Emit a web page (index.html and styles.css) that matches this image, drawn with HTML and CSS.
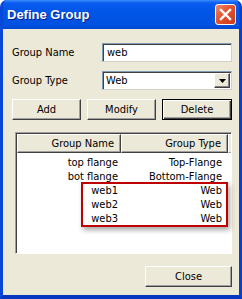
FILE: index.html
```html
<!DOCTYPE html>
<html lang="en">
<head>
    <meta charset="UTF-8">
    <title>Define Group</title>
    <link rel="stylesheet" href="styles.css">
</head>
<body>
    <div class="window">
        <div class="title-bar">
            <span class="title-text">Define Group</span>
            <div class="close-x">
                <svg width="13" height="13" viewBox="0 0 13 13">
                    <path d="M2 2 L11 11 M11 2 L2 11" stroke="#fff" stroke-width="2.4" stroke-linecap="square"/>
                </svg>
            </div>
        </div>

        <div class="content">
            <div class="field-row">
                <span class="label">Group Name</span>
                <div class="text-box">web</div>
            </div>
            <div class="field-row">
                <span class="label">Group Type</span>
                <div class="combo">
                    <span class="combo-value">Web</span>
                    <span class="combo-arrow">
                        <svg width="7" height="4" viewBox="0 0 7 4"><path d="M0 0 H7 L3.5 4 Z" fill="#000"/></svg>
                    </span>
                </div>
            </div>

            <div class="button-row">
                <div class="btn">Add</div>
                <div class="btn">Modify</div>
                <div class="btn btn-default"><span>Delete</span></div>
            </div>

            <div class="list">
                <div class="list-head">
                    <div class="head-cell col-name">Group Name</div>
                    <div class="head-cell col-type">Group Type</div>
                    <div class="head-fill"></div>
                </div>
                <div class="list-body">
                    <div class="list-row"><span class="col-name">top flange</span><span class="col-type">Top-Flange</span></div>
                    <div class="list-row"><span class="col-name">bot flange</span><span class="col-type">Bottom-Flange</span></div>
                    <div class="list-row"><span class="col-name">web1</span><span class="col-type">Web</span></div>
                    <div class="list-row"><span class="col-name">web2</span><span class="col-type">Web</span></div>
                    <div class="list-row"><span class="col-name">web3</span><span class="col-type">Web</span></div>
                </div>
                <div class="highlight"></div>
            </div>

            <div class="footer">
                <div class="btn btn-close">Close</div>
            </div>
        </div>
    </div>
</body>
</html>
```

FILE: styles.css
```css
* {
    box-sizing: border-box;
}

body {
    margin: 0;
    font-family: 'DejaVu Sans Condensed', 'DejaVu Sans', sans-serif;
    font-size: 11px;
    color: #000;
}

.window {
    width: 242px;
    height: 299px;
    display: flex;
    flex-direction: column;
    background: #0055e5;
    border-left: 3px solid #0848d8;
    border-right: 3px solid #0a3fc8;
    border-bottom: 4px solid #0838c0;
    border-radius: 7px 7px 0 0;
    overflow: hidden;
}

.title-bar {
    height: 29px;
    margin: 0 -3px;
    padding: 0 6px 0 7px;
    display: flex;
    justify-content: space-between;
    align-items: center;
    background: linear-gradient(#3c8cfb 0, #0a5cf0 3px, #0358ea 8px, #0055e5 50%, #0052e0 85%, #0046d0 100%);
}

.title-text {
    color: #fff;
    font-family: 'Liberation Sans', Arial, sans-serif;
    font-weight: bold;
    font-size: 13px;
    text-shadow: 1px 1px 0 #0a1f8a;
    padding-bottom: 1px;
}

.close-x {
    width: 21px;
    height: 21px;
    border: 1px solid #fff;
    border-radius: 3px;
    background: linear-gradient(135deg, #f0876a, #e2532d 45%, #c83a1c);
    display: flex;
    align-items: center;
    justify-content: center;
    margin-top: -1px;
}

.content {
    flex: 1;
    background: #ece9d8;
    padding: 14px 7px 0 9px;
    display: flex;
    flex-direction: column;
}

.field-row {
    display: flex;
    align-items: center;
    justify-content: space-between;
    height: 19px;
    margin-bottom: 9px;
}

.text-box,
.combo {
    width: 130px;
    height: 19px;
    background: #fff;
    border-top: 1px solid #7f9db9;
    border-left: 1px solid #7f9db9;
    border-right: 1px solid #d4d0c8;
    border-bottom: 1px solid #d4d0c8;
    box-shadow: inset 1px 1px 0 #404040;
    padding: 2px 4px;
}

.combo {
    display: flex;
    justify-content: space-between;
    align-items: center;
    padding: 0 1px 0 3px;
}

.combo-arrow {
    width: 16px;
    height: 15px;
    background: #ece9d8;
    border-top: 1px solid #fff;
    border-left: 1px solid #fff;
    border-right: 1px solid #404040;
    border-bottom: 1px solid #404040;
    box-shadow: inset -1px -1px 0 #808080;
    display: flex;
    align-items: center;
    justify-content: center;
}

.button-row {
    display: flex;
    gap: 6px;
}

.btn {
    width: 69px;
    height: 21px;
    background: #ece9d8;
    border-top: 1px solid #fff;
    border-left: 1px solid #fff;
    border-right: 1px solid #404040;
    border-bottom: 1px solid #404040;
    box-shadow: inset -1px -1px 0 #a0a0a0;
    display: flex;
    align-items: center;
    justify-content: center;
}

.btn-default {
    width: 70px;
    border: 1px solid #000;
    box-shadow: inset 1px 1px 0 #fff, inset -1px -1px 0 #404040, inset -2px -2px 0 #a0a0a0;
}

.list {
    position: relative;
    margin: 12px 0 0 3px;
    height: 122px;
    background: #fff;
    border-top: 1px solid #a0a0a0;
    border-left: 1px solid #a0a0a0;
    border-right: 1px solid #fff;
    border-bottom: 1px solid #fff;
    box-shadow: inset 1px 1px 0 #404040;
    padding: 1px 0 0 1px;
}

.list-head {
    display: flex;
    height: 19px;
}

.head-cell {
    background: #ece9d8;
    border-top: 1px solid #fff;
    border-left: 1px solid #fff;
    border-right: 1px solid #404040;
    border-bottom: 1px solid #404040;
    box-shadow: inset -1px -1px 0 #a0a0a0;
    display: flex;
    align-items: center;
    justify-content: flex-end;
    padding-right: 6px;
}

.head-cell.col-name {
    width: 104px;
}

.head-cell.col-type {
    width: 107px;
}

.head-fill {
    flex: 1;
    background: #ece9d8;
    border-top: 1px solid #fff;
    border-left: 1px solid #fff;
    border-bottom: 1px solid #a0a0a0;
}

.list-body {
    padding-top: 2px;
}

.list-row {
    display: flex;
    height: 14px;
    align-items: center;
}

.list-row .col-name {
    width: 101px;
    text-align: right;
}

.list-row .col-type {
    width: 104px;
    text-align: right;
}

.highlight {
    position: absolute;
    left: 65px;
    top: 49px;
    width: 147px;
    height: 45px;
    border: 2px solid #c00000;
    box-shadow: 2px 3px 5px rgba(0, 0, 0, 0.35);
}

.footer {
    display: flex;
    justify-content: flex-end;
    margin-top: 12px;
}

.btn-close {
    width: 87px;
    height: 21px;
}
```
